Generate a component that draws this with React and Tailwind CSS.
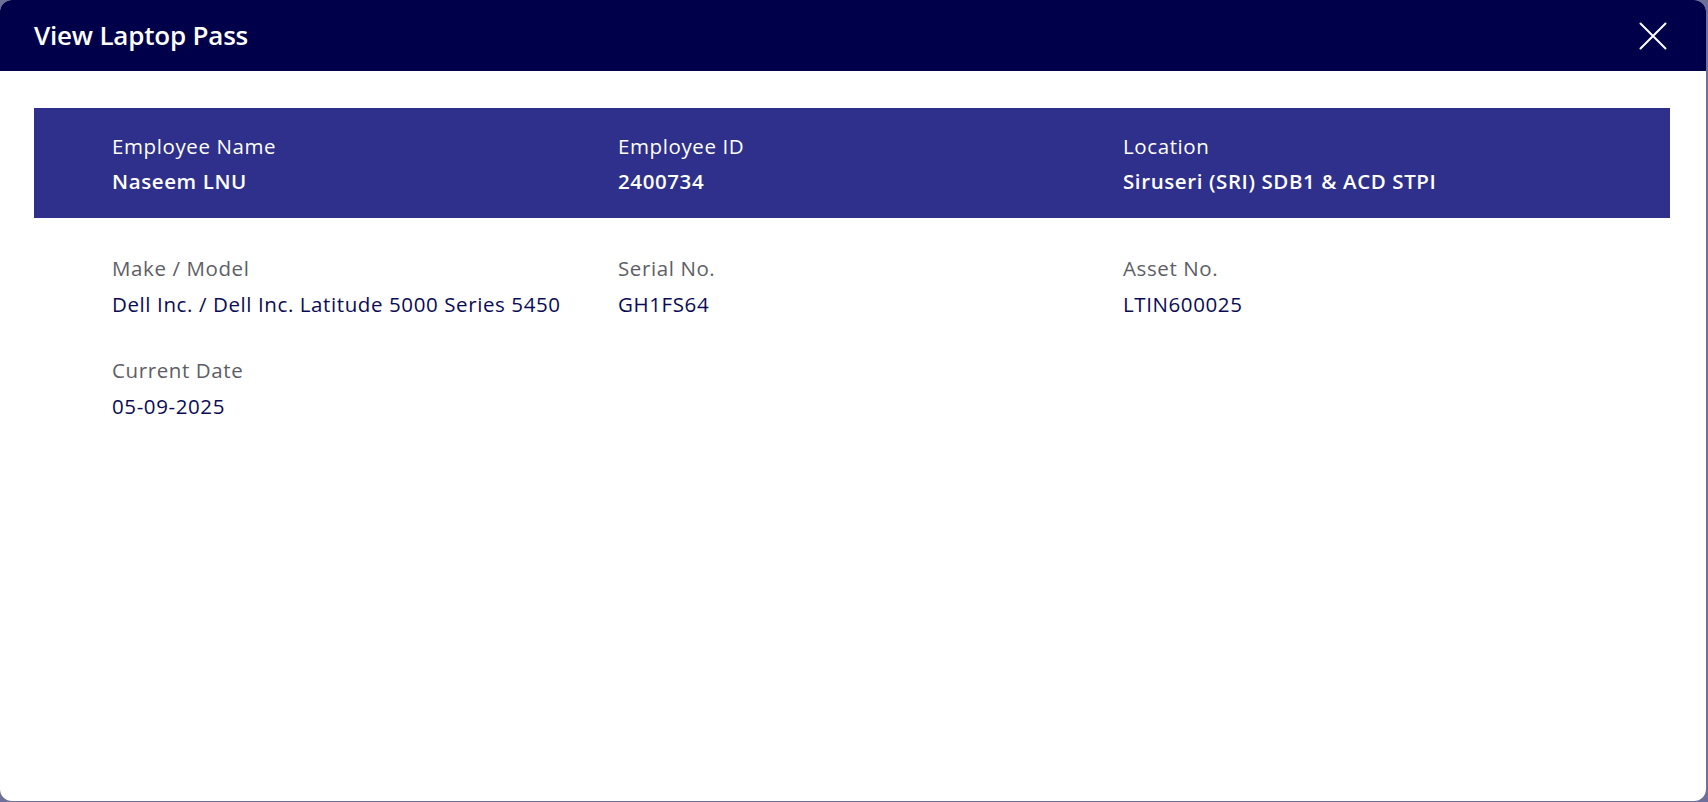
import React from 'react';

const topFields = [
  { label: 'Employee Name', value: 'Naseem LNU' },
  { label: 'Employee ID', value: '2400734' },
  { label: 'Location', value: 'Siruseri (SRI) SDB1 & ACD STPI' },
];

const details = [
  { label: 'Make / Model', value: 'Dell Inc. / Dell Inc. Latitude 5000 Series 5450' },
  { label: 'Serial No.', value: 'GH1FS64' },
  { label: 'Asset No.', value: 'LTIN600025' },
  { label: 'Current Date', value: '05-09-2025' },
];

export default function App() {
  return (
    <div className="w-[1708px] h-[802px] bg-[#6f7099] font-['Open_Sans',sans-serif]">
      <div className="w-[1706px] h-[801px] bg-white rounded-xl overflow-hidden flex flex-col">
        {/* Header */}
        <div className="h-[71px] shrink-0 bg-[#00004a] flex items-center justify-between pl-[34px] pr-[39px]">
          <h1 className="text-white text-[26px] font-semibold tracking-[-0.2px]">View Laptop Pass</h1>
          <svg width="28" height="28" viewBox="0 0 28 28" fill="none" stroke="white" strokeWidth="2" strokeLinecap="round">
            <path d="M1.5 1.5 26.5 26.5M26.5 1.5 1.5 26.5" />
          </svg>
        </div>

        {/* Body */}
        <div className="pt-[37px] px-[34px] pr-[36px]">
          <div className="h-[110px] bg-[#2e308b] pl-[78px] flex items-center">
            <div className="grid grid-cols-[506px_505px_505px]">
              {topFields.map((f) => (
                <div key={f.label} className="flex flex-col gap-[9px] tracking-[0.6px]">
                  <span className="text-white text-[20.5px] leading-[26px]">{f.label}</span>
                  <span className="text-white text-[20.5px] leading-[26px] font-semibold">{f.value}</span>
                </div>
              ))}
            </div>
          </div>

          <div className="pl-[78px] pt-[37px] grid grid-cols-[506px_505px_505px] gap-y-[40px]">
            {details.map((f) => (
              <div key={f.label} className="flex flex-col gap-[10px] tracking-[0.6px]">
                <span className="text-[#5e5e66] text-[20.5px] leading-[26px]">{f.label}</span>
                <span className="text-[#0b0b55] text-[20.5px] leading-[26px]">{f.value}</span>
              </div>
            ))}
          </div>
        </div>
      </div>
    </div>
  );
}
